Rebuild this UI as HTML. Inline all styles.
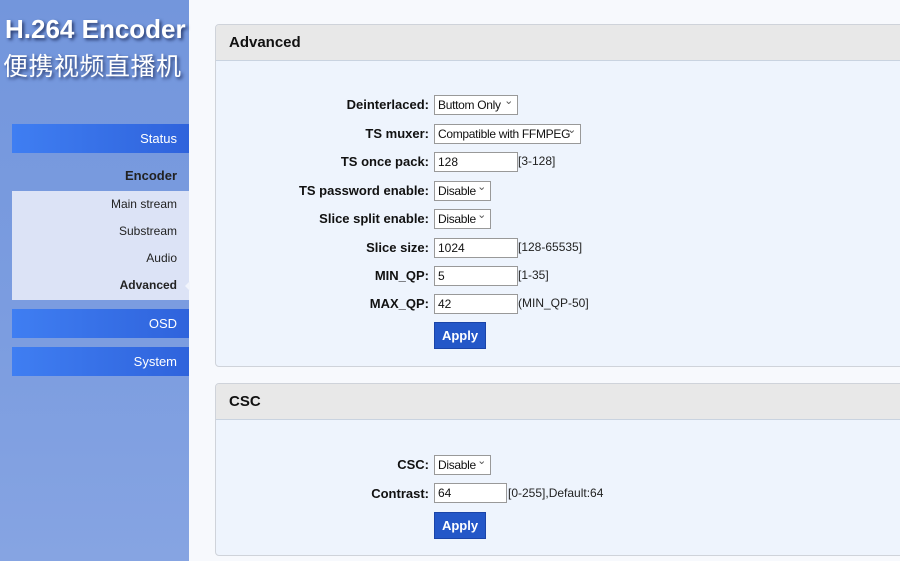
<!DOCTYPE html>
<html><head><meta charset="utf-8"><style>
*{box-sizing:border-box;margin:0;padding:0}
body{width:900px;height:561px;overflow:hidden;background:#f7f9fd;font-family:"Liberation Sans",Arial,sans-serif;position:relative}
#side{position:absolute;left:0;top:0;width:189px;height:561px;background:linear-gradient(180deg,#7396dc 0%,#7c9de0 60%,#86a4e2 100%)}
.logo1{position:absolute;left:5px;top:14px;font:bold 26px "Liberation Sans",sans-serif;color:#fff;text-shadow:2px 2px 3px #2a3d70;white-space:nowrap}
.logo2{position:absolute;left:3px;top:48px;font:25px "Noto Sans CJK SC",sans-serif;color:#fff;text-shadow:2px 2px 3px #2a3d70;line-height:34px;white-space:nowrap;letter-spacing:0.5px}
.nav{position:absolute;left:12px;width:177px;height:29px;background:linear-gradient(90deg,#3f7ef2,#2f63dc);color:#fff;font-size:13px;text-align:right;padding-right:12px;line-height:29px}
.sub{position:absolute;left:12px;top:191px;width:177px;height:109px;background:#dce3f6}
.sub div{position:absolute;right:12px;font-size:12px;color:#222}
.panel{position:absolute;left:215px;width:700px;border:1px solid #cfd3da;border-radius:4px;background:#eef4fd;overflow:hidden}
.ph{height:36px;background:#e8e8e8;border-bottom:1px solid #c9d3e0;font-weight:bold;font-size:15px;padding-left:13px;line-height:36px;color:#111}
.lbl{position:absolute;right:471px;font-weight:bold;font-size:13px;color:#111;white-space:nowrap}
.ctl{position:absolute;left:434px;height:20px;border:1px solid #999;background:#fff;font-size:12px;line-height:18px;padding-left:3px;color:#111;white-space:nowrap;overflow:hidden}
.sel{padding-right:14px;letter-spacing:-0.3px}
.sel:after{content:"⌄";position:absolute;right:4px;top:-4px;font-size:11px;color:#555}
.hint{position:absolute;font-size:12px;color:#222}
.btn{position:absolute;left:434px;width:52px;height:27px;background:#2457c8;border:1px solid #1a44a8;color:#fff;font-weight:bold;font-size:13px;text-align:center;line-height:25px}
</style></head><body>
<div id="side">
<div class="logo1">H.264 Encoder</div>
<div class="logo2">便携视频直播机</div>
<div class="nav" style="top:124px">Status</div>
<div style="position:absolute;right:12px;top:168px;font-weight:bold;font-size:13px;color:#222">Encoder</div>
<div class="sub">
<div style="top:6px">Main stream</div>
<div style="top:33px">Substream</div>
<div style="top:60px">Audio</div>
<div style="top:87px;font-weight:bold">Advanced</div>
</div>
<div style="position:absolute;left:185px;top:281px;width:0;height:0;border-top:5px solid transparent;border-bottom:5px solid transparent;border-right:5px solid #f2f5fc"></div>
<div class="nav" style="top:309px">OSD</div>
<div class="nav" style="top:347px">System</div>
</div>
<div class="panel" style="top:24px;height:343px"><div class="ph">Advanced</div></div>
<div class="panel" style="top:383px;height:173px"><div class="ph">CSC</div></div>

<div class="lbl" style="top:97px">Deinterlaced:</div><div class="ctl sel" style="top:95px;width:84px">Buttom Only</div>
<div class="lbl" style="top:126px">TS muxer:</div><div class="ctl sel" style="top:124px;width:147px">Compatible with FFMPEG</div>
<div class="lbl" style="top:154px">TS once pack:</div><div class="ctl" style="top:152px;width:84px">128</div><div class="hint" style="left:518px;top:154px">[3-128]</div>
<div class="lbl" style="top:183px">TS password enable:</div><div class="ctl sel" style="top:181px;width:57px">Disable</div>
<div class="lbl" style="top:211px">Slice split enable:</div><div class="ctl sel" style="top:209px;width:57px">Disable</div>
<div class="lbl" style="top:240px">Slice size:</div><div class="ctl" style="top:238px;width:84px">1024</div><div class="hint" style="left:518px;top:240px">[128-65535]</div>
<div class="lbl" style="top:268px">MIN_QP:</div><div class="ctl" style="top:266px;width:84px">5</div><div class="hint" style="left:518px;top:268px">[1-35]</div>
<div class="lbl" style="top:296px">MAX_QP:</div><div class="ctl" style="top:294px;width:84px">42</div><div class="hint" style="left:518px;top:296px">(MIN_QP-50]</div>
<div class="btn" style="top:322px">Apply</div>

<div class="lbl" style="top:457px">CSC:</div><div class="ctl sel" style="top:455px;width:57px">Disable</div>
<div class="lbl" style="top:486px">Contrast:</div><div class="ctl" style="top:483px;width:73px">64</div><div class="hint" style="left:508px;top:486px">[0-255],Default:64</div>
<div class="btn" style="top:512px">Apply</div>
</body></html>
